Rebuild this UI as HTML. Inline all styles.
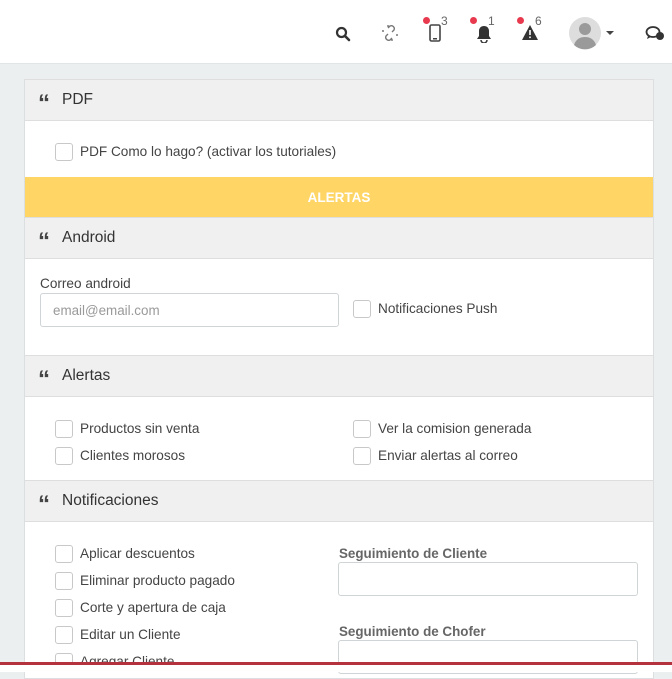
<!DOCTYPE html>
<html><head><meta charset="utf-8"><style>
*{margin:0;padding:0;box-sizing:border-box}
body{width:672px;height:672px;overflow:hidden;background:#eceff0;font-family:"Liberation Sans",sans-serif;color:#333;position:relative}
.top{position:absolute;left:0;top:0;width:672px;height:64px;background:#fff;border-bottom:1px solid #e2e5e6}
.abs{position:absolute}
.panel{position:absolute;left:24px;top:79px;width:630px;height:600px;background:#fff;border:1px solid #dcdfe0}
.hd{position:absolute;left:0;width:628px;height:42px;background:#f0f0f0;border-top:1px solid #dedede;border-bottom:1px solid #dedede;font-size:15.5px;color:#333;line-height:40px;padding-left:37px}
.hd:before{content:"\201C";position:absolute;left:13px;top:4px;font-size:24px;font-weight:bold;font-family:"Liberation Sans",sans-serif;color:#444}
.cb{position:absolute;width:18px;height:18px;border:1px solid #c8c8c8;border-radius:3px;background:#fff}
.t{position:absolute;font-size:13.6px;color:#444;white-space:nowrap}
.lbl{position:absolute;font-size:13.4px;font-weight:bold;color:#666}
.inp{position:absolute;border:1px solid #cfd4d6;border-radius:3px;background:#fff}
.dot{position:absolute;width:7px;height:7px;border-radius:50%;background:#e8394e}
.n{position:absolute;font-size:12px;color:#666}
</style></head><body>
<div class="top">
<svg class="abs" style="left:335px;top:26px" width="16" height="16" viewBox="0 0 16 16"><circle cx="6.5" cy="6.5" r="4.5" fill="none" stroke="#333" stroke-width="2.2"/><path d="M10 10l4 4" stroke="#333" stroke-width="2.6" stroke-linecap="round"/></svg>
<svg class="abs" style="left:381px;top:24px" width="18" height="18" viewBox="0 0 18 18" fill="none" stroke="#777" stroke-width="1.4"><path d="M7 4l2-2a3 3 0 0 1 4 4l-2 2M11 14l-2 2a3 3 0 0 1-4-4l2-2M3 7H1M7 3V1M15 11h2M11 15v2"/></svg>
<div class="dot" style="left:423px;top:17px"></div><div class="n" style="left:441px;top:14px">3</div>
<svg class="abs" style="left:429px;top:24px" width="12" height="18" viewBox="0 0 12 18"><rect x="1" y="1" width="10" height="16" rx="1.5" fill="none" stroke="#444" stroke-width="1.6"/><rect x="4" y="14" width="4" height="1.5" fill="#444"/></svg>
<div class="dot" style="left:470px;top:17px"></div><div class="n" style="left:488px;top:14px">1</div>
<svg class="abs" style="left:475px;top:25px" width="18" height="18" viewBox="0 0 18 18"><path d="M9 1c3 0 5 2 5 5v5l2 3H2l2-3V6c0-3 2-5 5-5z" fill="#333"/><path d="M6 15a3 3 0 0 0 6 0" fill="none" stroke="#333" stroke-width="1.5"/></svg>
<div class="dot" style="left:517px;top:17px"></div><div class="n" style="left:535px;top:14px">6</div>
<svg class="abs" style="left:521px;top:24px" width="18" height="17" viewBox="0 0 18 17"><path d="M9 1L17 16H1z" fill="#333"/><rect x="8.2" y="6" width="1.6" height="5" fill="#fff"/><rect x="8.2" y="12.5" width="1.6" height="1.6" fill="#fff"/></svg>
<svg class="abs" style="left:568px;top:16px" width="34" height="34" viewBox="0 0 34 34"><circle cx="17" cy="17" r="16" fill="#ddd"/><circle cx="17" cy="13" r="6" fill="#9a9a9a"/><path d="M6 29c2-6 6-8 11-8s9 2 11 8a16 16 0 0 1-22 0z" fill="#9a9a9a"/></svg>
<div class="abs" style="left:606px;top:31px;border-left:4px solid transparent;border-right:4px solid transparent;border-top:4px solid #444"></div>
<svg class="abs" style="left:645px;top:25px" width="20" height="16" viewBox="0 0 20 16"><ellipse cx="8" cy="7" rx="6.5" ry="5" fill="none" stroke="#333" stroke-width="1.8"/><path d="M3 11l-1 3 4-2" fill="#333"/><circle cx="15" cy="11" r="4" fill="#333"/></svg>
</div>
<div class="panel">
<div class="hd" style="top:-1px">PDF</div>
<div class="cb" style="left:30px;top:63px"></div><div class="t" style="left:55px;top:64px">PDF Como lo hago? (activar los tutoriales)</div>
<div class="abs" style="left:0;top:97px;width:628px;height:41px;background:#ffd666;color:#fff;font-weight:bold;font-size:13.5px;text-align:center;line-height:41px">ALERTAS</div>
<div class="hd" style="top:137px">Android</div>
<div class="t" style="left:15px;top:196px">Correo android</div>
<div class="inp" style="left:15px;top:213px;width:299px;height:34px;font-size:13.4px;color:#999;padding:9px 12px">email@email.com</div>
<div class="cb" style="left:328px;top:220px"></div><div class="t" style="left:353px;top:221px">Notificaciones Push</div>
<div class="hd" style="top:275px">Alertas</div>
<div class="cb" style="left:30px;top:340px"></div><div class="t" style="left:55px;top:341px">Productos sin venta</div>
<div class="cb" style="left:328px;top:340px"></div><div class="t" style="left:353px;top:341px">Ver la comision generada</div>
<div class="cb" style="left:30px;top:367px"></div><div class="t" style="left:55px;top:368px">Clientes morosos</div>
<div class="cb" style="left:328px;top:367px"></div><div class="t" style="left:353px;top:368px">Enviar alertas al correo</div>
<div class="hd" style="top:400px">Notificaciones</div>
<div class="cb" style="left:30px;top:465px"></div><div class="t" style="left:55px;top:466px">Aplicar descuentos</div>
<div class="cb" style="left:30px;top:492px"></div><div class="t" style="left:55px;top:493px">Eliminar producto pagado</div>
<div class="cb" style="left:30px;top:519px"></div><div class="t" style="left:55px;top:520px">Corte y apertura de caja</div>
<div class="cb" style="left:30px;top:546px"></div><div class="t" style="left:55px;top:547px">Editar un Cliente</div>
<div class="cb" style="left:30px;top:573px"></div><div class="t" style="left:55px;top:574px">Agregar Cliente</div>
<div class="lbl" style="left:314px;top:466px">Seguimiento de Cliente</div>
<div class="inp" style="left:313px;top:482px;width:300px;height:34px"></div>
<div class="lbl" style="left:314px;top:544px">Seguimiento de Chofer</div>
<div class="inp" style="left:313px;top:560px;width:300px;height:34px"></div>
</div>
<div class="abs" style="left:0;top:662px;width:672px;height:3px;background:#b3323e"></div>
<div class="abs" style="left:0;top:665px;width:672px;height:7px;background:#fff"></div>
</body></html>
